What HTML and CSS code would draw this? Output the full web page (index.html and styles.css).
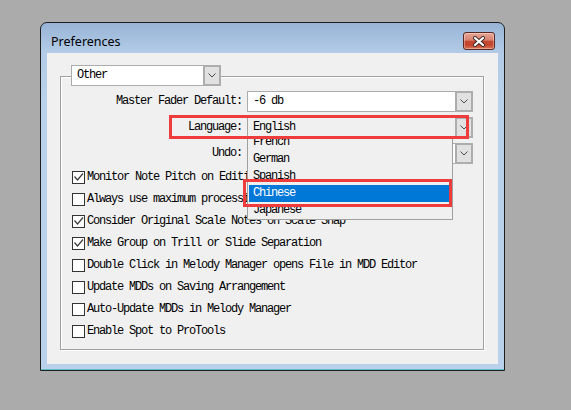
FILE: index.html
```html
<!DOCTYPE html>
<html>
<head>
<meta charset="utf-8">
<title>Preferences</title>
<link rel="stylesheet" href="styles.css">
</head>
<body>
<div class="window">
  <div class="titlebar">
    <span class="title">Preferences</span>
    <span class="close">
      <svg width="14" height="11" viewBox="0 0 14 11">
        <path d="M3 2 L11 9 M11 2 L3 9" stroke="#3c2a28" stroke-width="4" stroke-linecap="round"/>
        <path d="M3 2 L11 9 M11 2 L3 9" stroke="#fff" stroke-width="2.2" stroke-linecap="round"/>
      </svg>
    </span>
  </div>
  <div class="client">
    <div class="group">
      <div class="combo legend">
        <span class="field">Other</span>
        <span class="btn"><svg width="8" height="5" viewBox="0 0 8 5"><polyline points="0.5,0.5 4,4 7.5,0.5" fill="none" stroke="#4a4a4a" stroke-width="1"/></svg></span>
      </div>
      <div class="form">
        <span class="lbl">Master Fader Default:</span>
        <div class="combo">
          <span class="field">-6 db</span>
          <span class="btn"><svg width="8" height="5" viewBox="0 0 8 5"><polyline points="0.5,0.5 4,4 7.5,0.5" fill="none" stroke="#4a4a4a" stroke-width="1"/></svg></span>
        </div>
        <span class="lbl">Language:</span>
        <div class="combo open">
          <span class="field">English</span>
          <span class="btn"><svg width="8" height="5" viewBox="0 0 8 5"><polyline points="0.5,0.5 4,4 7.5,0.5" fill="none" stroke="#4a4a4a" stroke-width="1"/></svg></span>
          <ul class="list">
            <li>French</li>
            <li>German</li>
            <li>Spanish</li>
            <li class="sel">Chinese</li>
            <li>Japanese</li>
          </ul>
        </div>
        <span class="lbl">Undo:</span>
        <div class="combo">
          <span class="field">10</span>
          <span class="btn"><svg width="8" height="5" viewBox="0 0 8 5"><polyline points="0.5,0.5 4,4 7.5,0.5" fill="none" stroke="#4a4a4a" stroke-width="1"/></svg></span>
        </div>
      </div>
      <div class="checks">
        <div class="check"><span class="box"><svg width="11" height="11" viewBox="0 0 11 11"><polyline points="1.5,4.5 4.5,8 10,1.5" fill="none" stroke="#3a3a3a" stroke-width="1.2"/></svg></span><span class="txt">Monitor Note Pitch on Editing</span></div>
        <div class="check"><span class="box"></span><span class="txt">Always use maximum processing power</span></div>
        <div class="check"><span class="box"><svg width="11" height="11" viewBox="0 0 11 11"><polyline points="1.5,4.5 4.5,8 10,1.5" fill="none" stroke="#3a3a3a" stroke-width="1.2"/></svg></span><span class="txt">Consider Original Scale Notes on Scale Snap</span></div>
        <div class="check"><span class="box"><svg width="11" height="11" viewBox="0 0 11 11"><polyline points="1.5,4.5 4.5,8 10,1.5" fill="none" stroke="#3a3a3a" stroke-width="1.2"/></svg></span><span class="txt">Make Group on Trill or Slide Separation</span></div>
        <div class="check"><span class="box"></span><span class="txt">Double Click in Melody Manager opens File in MDD Editor</span></div>
        <div class="check"><span class="box"></span><span class="txt">Update MDDs on Saving Arrangement</span></div>
        <div class="check"><span class="box"></span><span class="txt">Auto-Update MDDs in Melody Manager</span></div>
        <div class="check"><span class="box"></span><span class="txt">Enable Spot to ProTools</span></div>
      </div>
    </div>
  </div>
  <div class="mark mark-lang"></div>
  <div class="mark mark-cn"></div>
</div>
</body>
</html>
```

FILE: styles.css
```css
* { box-sizing: border-box; }
html, body { margin: 0; }
body {
  background: #ababab;
  width: 571px;
  height: 410px;
  overflow: hidden;
  padding: 22px 0 0 40px;
  font-family: "Liberation Mono", monospace;
  font-size: 12px;
  letter-spacing: -1.2px;
  color: #000;
}
.window {
  position: relative;
  width: 465px;
  height: 349px;
  border: 1px solid #1e1e1e;
  border-radius: 7px 7px 0 0;
  background: linear-gradient(180deg, #98b4d6 0px, #b3cbe6 30px, #b9d1ea 80px, #b9d1ea 100%);
  padding: 0 6px 6px;
  display: flex;
  flex-direction: column;
  box-shadow: inset 0 -1px 0 #5fbfcb;
}
.titlebar {
  height: 30px;
  flex: none;
  display: flex;
  justify-content: space-between;
  align-items: flex-start;
  padding: 9px 3px 0 4px;
}
.title {
  font-family: "Noto Sans", sans-serif;
  font-size: 12.5px;
  letter-spacing: 0;
  line-height: 18px;
  margin-top: 1px;
  color: #000;
}
.close {
  width: 32px;
  height: 18px;
  border: 1px solid #5a2620;
  border-radius: 3px;
  background: linear-gradient(180deg, #e8a696 0%, #d98270 45%, #c24a31 50%, #c5452c 75%, #d9785c 100%);
  display: flex;
  align-items: center;
  justify-content: center;
  box-shadow: inset 0 0 0 1px rgba(255,255,255,0.35);
}
.client {
  flex: 1;
  background: #f0f0f0;
  padding: 23px 14px 14px 13px;
  display: flex;
  flex-direction: column;
}
.group {
  flex: 1;
  border: 1px solid #a0a0a0;
  box-shadow: inset 1px 1px 0 #fff, 1px 1px 0 #fff;
  display: flex;
  flex-direction: column;
}
.combo {
  display: flex;
  height: 21px;
  line-height: 19px;
}
.combo .field {
  flex: 1;
  background: #fff;
  border: 1px solid #acacac;
  border-right: 0;
  padding-left: 5px;
  white-space: nowrap;
  overflow: hidden;
}
.combo .btn {
  width: 18px;
  flex: none;
  border: 2px solid #adadad;
  background: #e1e1e1;
  display: flex;
  align-items: center;
  justify-content: center;
}
.legend {
  width: 150px;
  margin: -12px 0 0 10px;
}
.form {
  margin-top: 5px;
  display: grid;
  grid-template-columns: 180px 226px;
  grid-auto-rows: 21px;
  column-gap: 6px;
  row-gap: 5px;
}
.lbl {
  text-align: right;
  line-height: 21px;
  white-space: nowrap;
  margin-right: -1px;
}
.combo.open {
  position: relative;
  z-index: 2;
}
.combo.open .field {
  background: #f0f0f0;
  border-color: #a6a6a6;
}
.list {
  position: absolute;
  z-index: -1;
  top: 16px;
  left: 0;
  width: 206px;
  margin: 0;
  padding: 0;
  list-style: none;
  background: #f0f0f0;
  border: 1px solid #a0a0a0;
}
.list li {
  height: 17px;
  line-height: 17px;
  margin: 0 1px;
  padding-left: 4px;
}
.list li.sel {
  background: #0078d7;
  color: #fff;
}
.checks {
  margin-top: 2px;
  padding-left: 11px;
}
.check {
  display: flex;
  align-items: flex-start;
  height: 22px;
  line-height: 22px;
  white-space: nowrap;
}
.box {
  width: 13px;
  height: 13px;
  margin-top: 5px;
  flex: none;
  border: 1px solid #333;
  background: #fff;
  display: flex;
}
.txt {
  margin-left: 2px;
}
.mark {
  position: absolute;
  border: 3px solid #ee3b3b;
  z-index: 5;
}
.mark-lang {
  left: 128px;
  top: 92px;
  width: 300px;
  height: 24px;
}
.mark-cn {
  left: 202px;
  top: 156px;
  width: 209px;
  height: 28px;
}
```
